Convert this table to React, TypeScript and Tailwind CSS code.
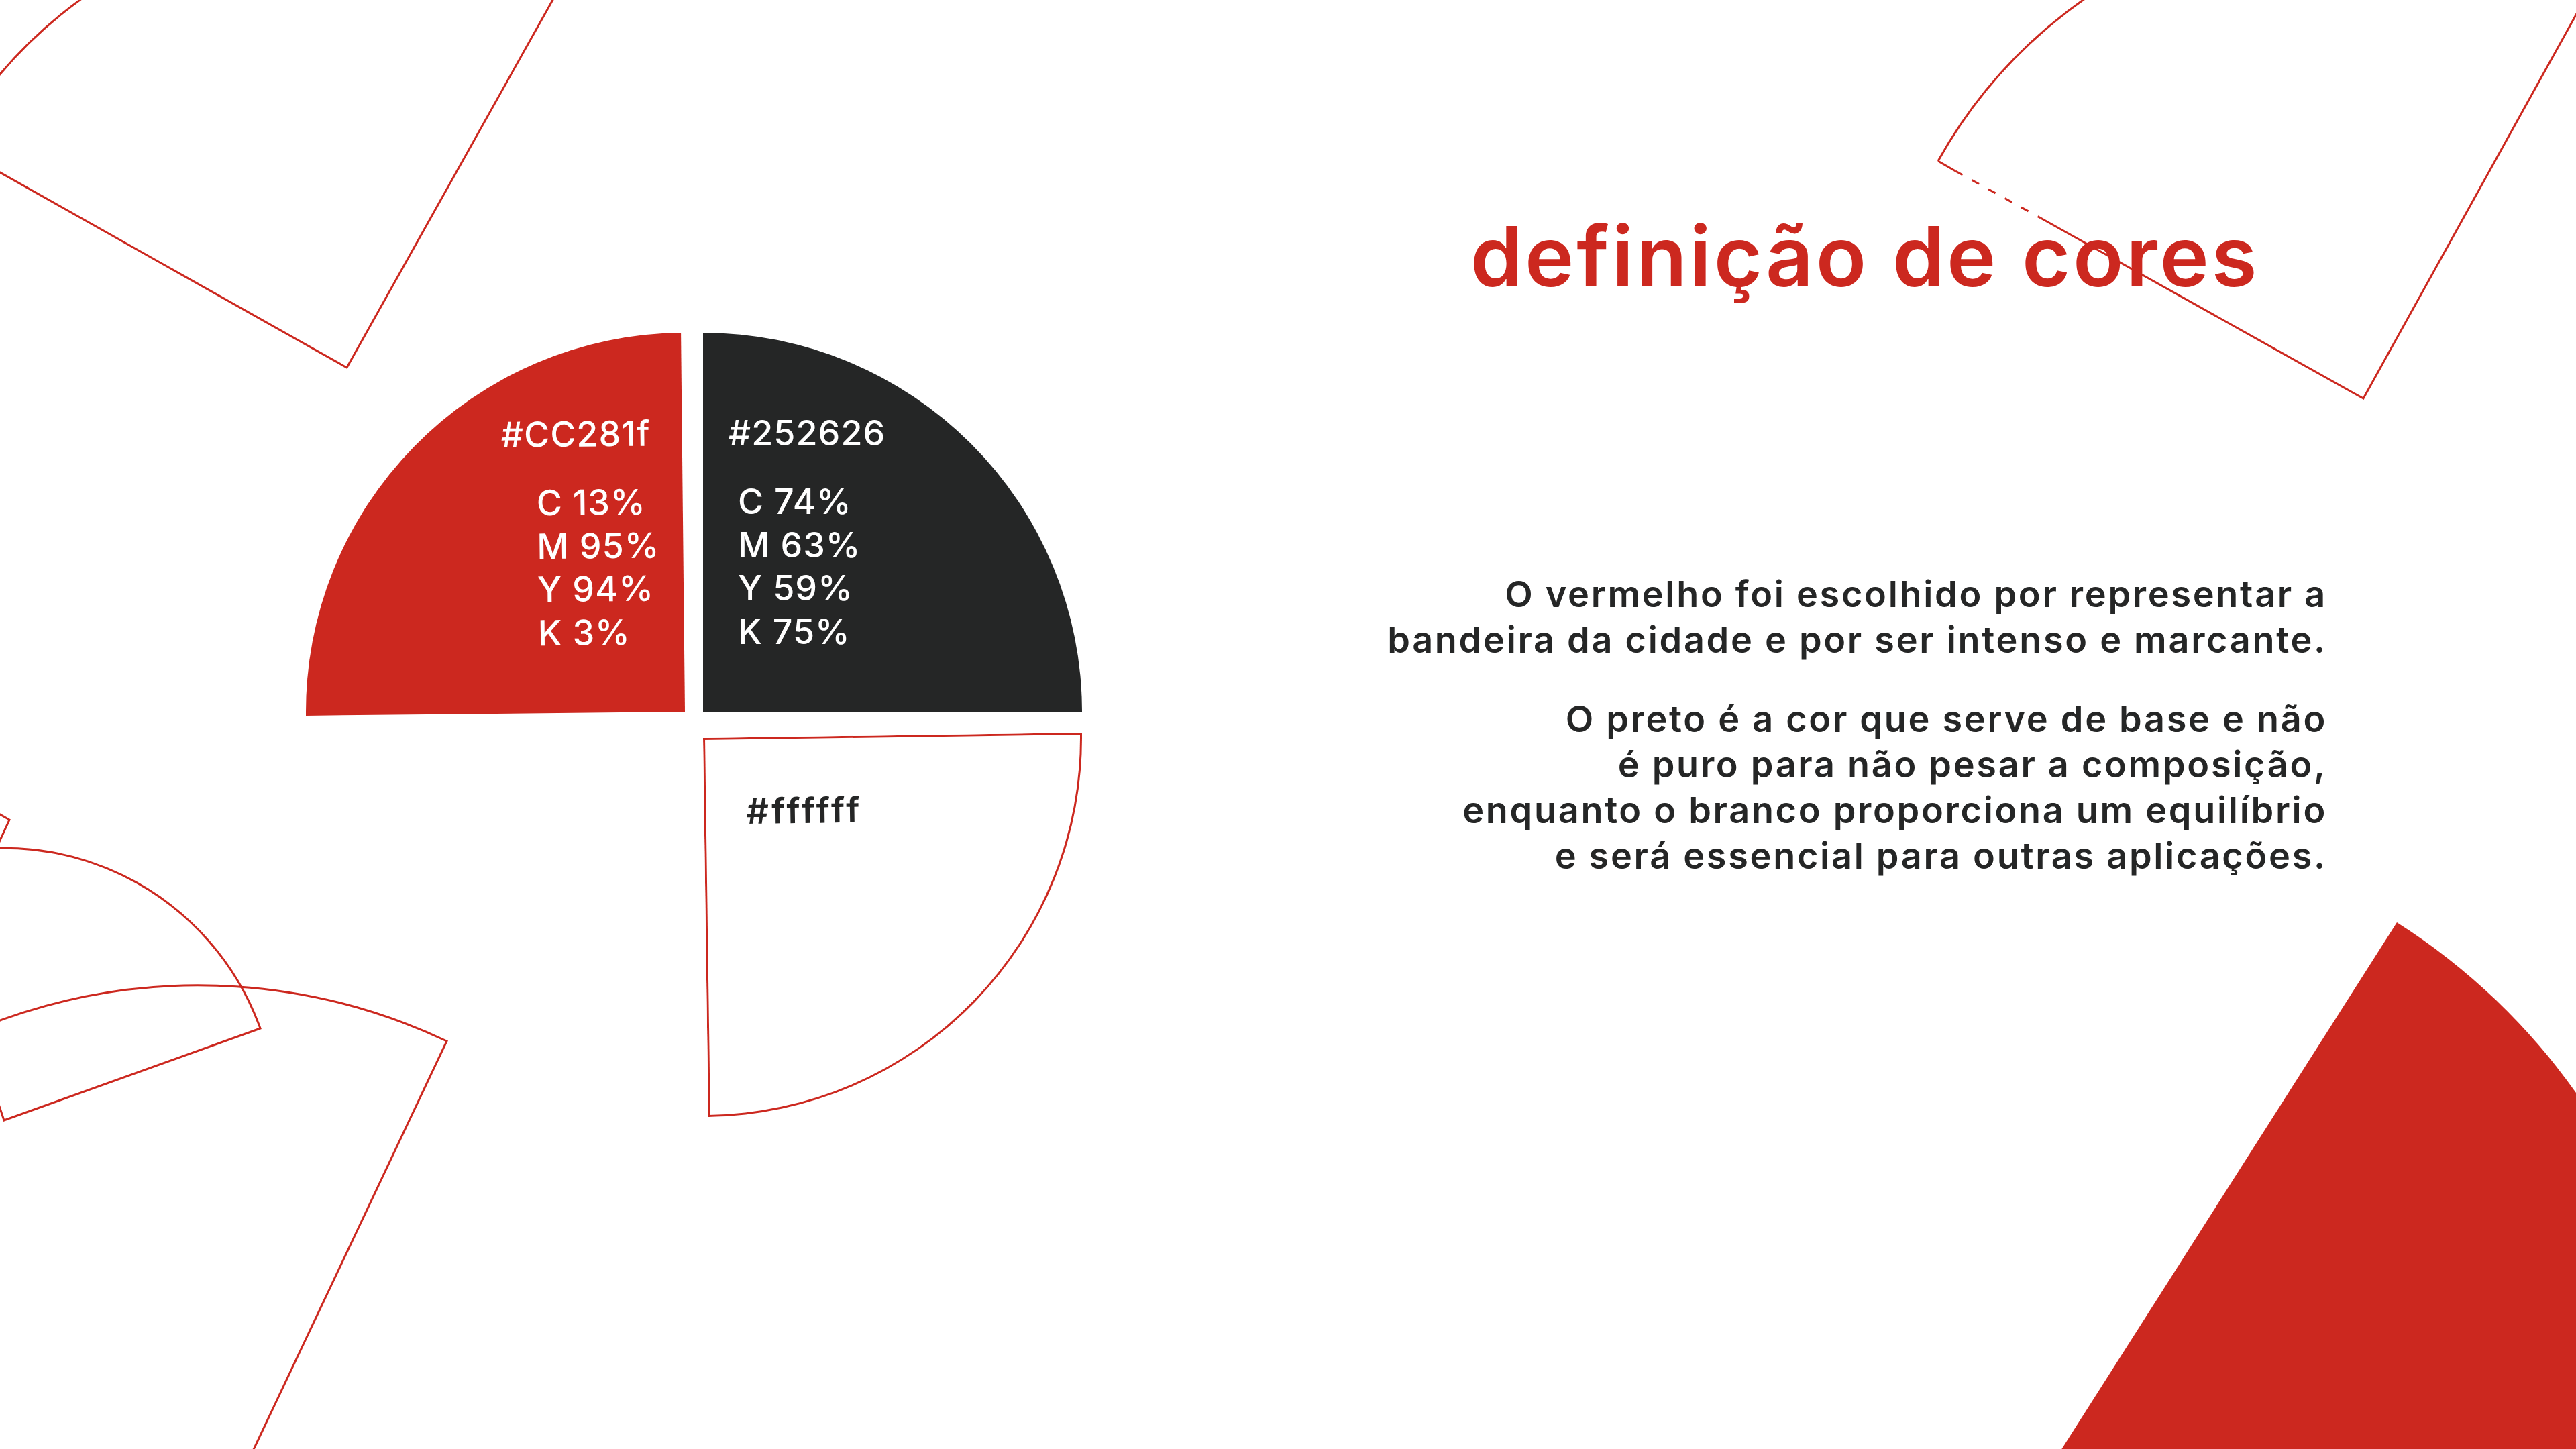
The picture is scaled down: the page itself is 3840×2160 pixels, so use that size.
const RED = '#cc281f'

function Decor() {
  return (
    <svg className="absolute inset-0 h-full w-full" viewBox="0 0 3840 2160" fill="none">
      <g stroke={RED} strokeWidth={3} strokeLinejoin="miter">
        {/* top left sector */}
        <path d="M -73 216 L 517 548 L 848 -43 A 677 677 0 0 0 -73 216" />
        {/* top right sector, the edge near the title is broken up */}
        <path d="M 2889 240 L 2915 255" />
        <path d="M 2915 255 L 3042 325" strokeDasharray="12 16" />
        <path d="M 3042 325 L 3523 594 L 3875 -41 A 726 726 0 0 0 2889 240" />
        {/* bottom left sectors */}
        <path d="M -21 1202 L 14 1222 L -8 1270" />
        <path d="M -122 1285 L 6 1670 L 388 1533 A 406 406 0 0 0 -122 1285" />
        <path d="M -486 1964 L 296 2334 L 666 1552 A 865 865 0 0 0 -486 1964" />
      </g>
      <path d="M 3060 2181 L 3573 1375 A 955 955 0 0 1 3866 2694 Z" fill={RED} />
    </svg>
  )
}

function Cmyk({ values }: { values: string[] }) {
  return (
    <div className="mt-[38px] flex flex-col whitespace-nowrap">
      {values.map((v) => (
        <span key={v}>{v}</span>
      ))}
    </div>
  )
}

function ColorWheel() {
  return (
    <div className="ml-[456px] mt-[496px] grid grid-cols-[565px_565px] grid-rows-[565px_565px] gap-x-[27px] gap-y-[39px] text-[52px] font-medium leading-[64.4px] tracking-[0.02em]">
      <div className="flex origin-bottom-right rotate-[-0.6deg] flex-col items-end rounded-tl-full bg-[#cc281f] pr-[47px] pt-[118px] text-white">
        <span>#CC281f</span>
        <div className="w-[171px]">
          <Cmyk values={['C 13%', 'M 95%', 'Y 94%', 'K 3%']} />
        </div>
      </div>
      <div className="flex flex-col rounded-tr-full bg-[#252626] pl-[38px] pt-[118px] text-white">
        <span>#252626</span>
        <div className="ml-[14px]">
          <Cmyk values={['C 74%', 'M 63%', 'Y 59%', 'K 75%']} />
        </div>
      </div>
      <div />
      <div className="origin-top-left rotate-[-0.8deg] rounded-br-full border-[3px] border-[#cc281f] bg-white pl-[60px] pt-[76px] font-semibold tracking-[0.08em] text-[#252626]">
        #ffffff
      </div>
    </div>
  )
}

export default function App() {
  return (
    <div className="relative h-[2160px] w-[3840px] overflow-hidden bg-white font-[Inter,'Noto_Sans',sans-serif]">
      <Decor />
      <div className="relative flex items-start">
        <ColorWheel />
        <div className="ml-[387px] mt-[320px] flex w-[1469px] flex-col">
          <h1 className="ml-[192px] whitespace-nowrap text-[124px] font-semibold leading-none tracking-[0.03em] text-[#cc281f]">
            definição de cores
          </h1>
          <div className="mt-[408px] flex flex-col gap-[50px] whitespace-nowrap text-right text-[54px] font-semibold leading-[68px] tracking-[0.05em] text-[#252626]">
            <p>
              O vermelho foi escolhido por representar a<br />
              bandeira da cidade e por ser intenso e marcante.
            </p>
            <p>
              O preto é a cor que serve de base e não<br />
              é puro para não pesar a composição,<br />
              enquanto o branco proporciona um equilíbrio<br />
              e será essencial para outras aplicações.
            </p>
          </div>
        </div>
      </div>
    </div>
  )
}
